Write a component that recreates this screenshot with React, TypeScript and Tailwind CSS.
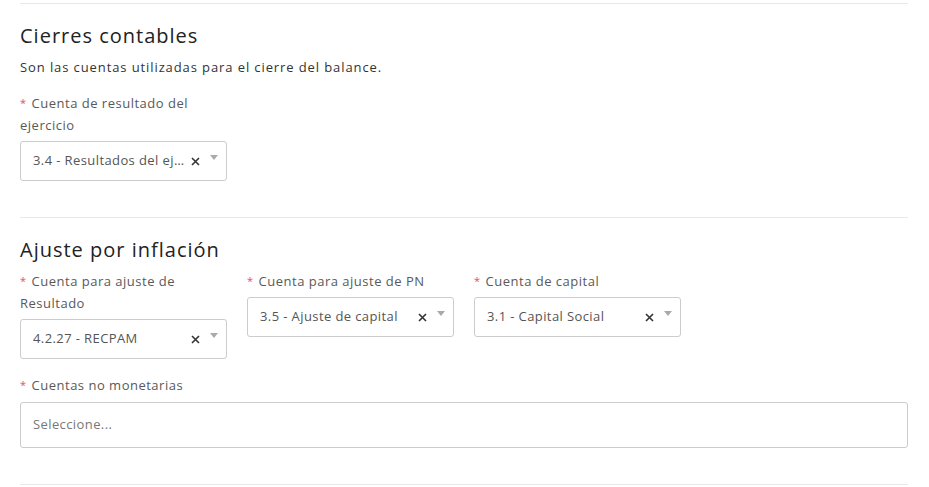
import { ReactNode } from "react";

const Divider = () => <div className="border-t border-[#e8e8e8]" />;

const Label = ({ children }: { children: ReactNode }) => (
  <div className="text-[13px] leading-[22px] tracking-[0.5px] text-[#595959]">
    <span className="mr-[5px] text-[11px] align-[1px] text-[#e0506f]">*</span>
    {children}
  </div>
);

const Caret = () => (
  <svg width="8" height="6" viewBox="0 0 8 6" className="mt-[-7px]">
    <path d="M0 0h8L4 5z" fill="#aaa" />
  </svg>
);

const Cross = () => (
  <svg width="9" height="9" viewBox="0 0 9 9">
    <path d="M1 1l7 7M8 1L1 8" stroke="#333" strokeWidth="1.6" />
  </svg>
);

const SelectBox = ({ value }: { value: string }) => (
  <div className="h-10 flex items-center rounded-[3px] border border-[#ccc] bg-white pl-3 pr-2">
    <span className="flex-1 truncate text-[13px] tracking-[0.4px] text-[#555]">{value}</span>
    <span className="ml-1 mr-[10px] flex">
      <Cross />
    </span>
    <Caret />
  </div>
);

const Field = ({ label, value }: { label: ReactNode; value: string }) => (
  <div className="w-[207px] flex flex-col gap-[5px]">
    <Label>{label}</Label>
    <SelectBox value={value} />
  </div>
);

export default function App() {
  return (
    <div
      className="min-h-screen bg-white pt-[3px]"
      style={{ fontFamily: '"Open Sans", "Noto Sans", sans-serif' }}
    >
      <div className="ml-5 w-[888px]">
        <Divider />
        <h2 className="mt-[18px] text-[20px] leading-7 tracking-[1px] text-[#222]">
          Cierres contables
        </h2>
        <p className="mt-[7px] text-[13px] leading-5 tracking-[0.9px] text-[#333]">
          Son las cuentas utilizadas para el cierre del balance.
        </p>
        <div className="mt-[15px]">
          <Field label="Cuenta de resultado del ejercicio" value="3.4 - Resultados del ejercicio" />
        </div>
        <div className="mt-9">
          <Divider />
        </div>
        <h2 className="mt-[18px] text-[20px] leading-7 tracking-[1px] text-[#222]">
          Ajuste por inflación
        </h2>
        <div className="mt-[6px] flex items-start gap-5">
          <Field label="Cuenta para ajuste de Resultado" value="4.2.27 - RECPAM" />
          <Field label="Cuenta para ajuste de PN" value="3.5 - Ajuste de capital" />
          <Field label="Cuenta de capital" value="3.1 - Capital Social" />
        </div>
        <div className="mt-[15px] flex flex-col gap-[6px]">
          <Label>Cuentas no monetarias</Label>
          <div className="h-[46px] flex items-center rounded-[3px] border border-[#ccc] px-3 text-[13px] tracking-[0.4px] text-[#777]">
            Seleccione...
          </div>
        </div>
        <div className="mt-9">
          <Divider />
        </div>
      </div>
    </div>
  );
}
